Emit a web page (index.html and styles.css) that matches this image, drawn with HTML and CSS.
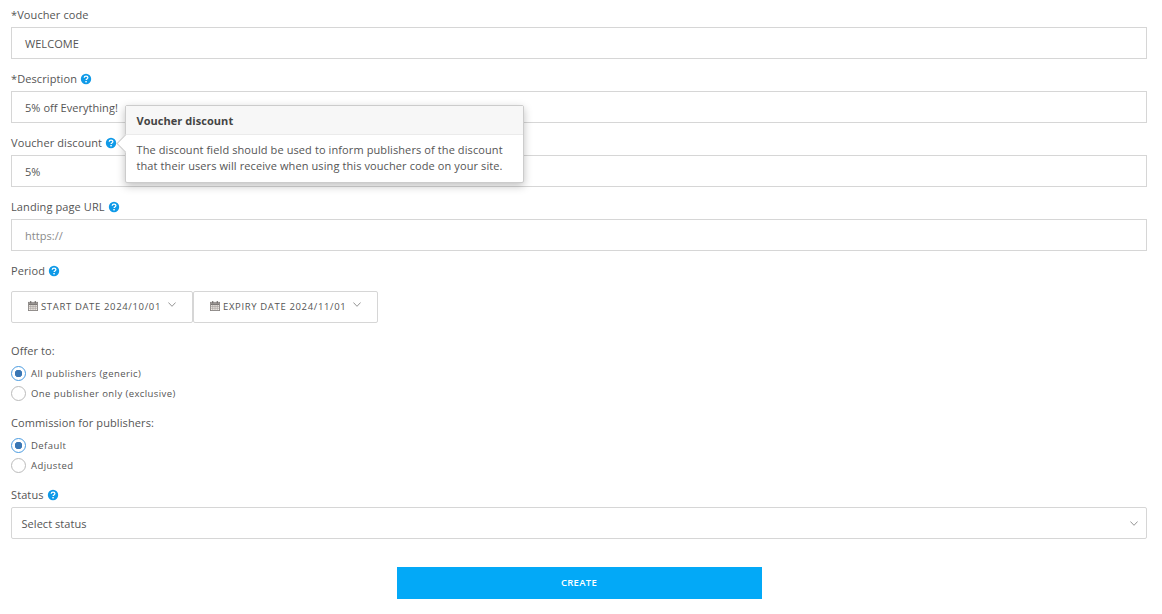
FILE: index.html
```html
<!DOCTYPE html>
<html lang="en">
<head>
<meta charset="utf-8">
<title>Voucher</title>
<link rel="stylesheet" href="styles.css">
</head>
<body>
<svg class="defs" width="0" height="0" aria-hidden="true">
  <symbol id="help" viewBox="0 0 12 12">
    <circle cx="6" cy="6" r="5.200" fill="#0f9ae8"/>
    <path d="M4.200 4.700C4.300 3.600 5 3.100 6 3.100c1.100 0 1.900.6 1.900 1.500 0 .8-.5 1.100-1.100 1.500-.5.3-.7.5-.7 1" fill="none" stroke="#fff" stroke-width="1.300"/>
    <rect x="5.300" y="8" width="1.500" height="1.400" fill="#fff"/>
  </symbol>
  <symbol id="cal" viewBox="0 0 11 11">
    <rect x=".5" y="1.500" width="10" height="9" fill="#f3eee8" stroke="#8a8684"/>
    <path d="M1 3.500h9" stroke="#7a7674" stroke-width="2"/>
    <path d="M.5 6h10M.5 8h10M3 4v6M5.500 4v6M8 4v6" stroke="#a09c9a" stroke-width=".7"/>
    <path d="M3 0v2.500M8 0v2.500" stroke="#6d6a68" stroke-width="1.200"/>
  </symbol>
  <symbol id="chev" viewBox="0 0 8 5">
    <path d="M.4.5 4 4.300 7.600.5" fill="none" stroke="#888" stroke-width=".9"/>
  </symbol>
</svg>
<form class="form">
  <div class="group">
    <div class="label">*Voucher code</div>
    <div class="input">WELCOME</div>
  </div>
  <div class="group">
    <div class="label">*Description <svg class="help"><use href="#help"/></svg></div>
    <div class="input">5% off Everything!</div>
  </div>
  <div class="group">
    <div class="label">Voucher discount <svg class="help"><use href="#help"/></svg></div>
    <div class="input">5%</div>
  </div>
  <div class="group">
    <div class="label">Landing page URL <svg class="help"><use href="#help"/></svg></div>
    <div class="input placeholder">https://</div>
  </div>
  <div class="group">
    <div class="label">Period <svg class="help"><use href="#help"/></svg></div>
    <div class="dates">
      <div class="date date-start"><svg class="cal"><use href="#cal"/></svg>START DATE 2024/10/01<svg class="chev chev-date"><use href="#chev"/></svg></div>
      <div class="date date-end"><svg class="cal"><use href="#cal"/></svg>EXPIRY DATE 2024/11/01<svg class="chev chev-date"><use href="#chev"/></svg></div>
    </div>
  </div>
  <div class="radios">
    <div class="label">Offer to:</div>
    <div class="radio"><span class="dot on"></span>All publishers (generic)</div>
    <div class="radio"><span class="dot"></span>One publisher only (exclusive)</div>
  </div>
  <div class="radios">
    <div class="label">Commission for publishers:</div>
    <div class="radio"><span class="dot on"></span>Default</div>
    <div class="radio"><span class="dot"></span>Adjusted</div>
  </div>
  <div class="group">
    <div class="label">Status <svg class="help"><use href="#help"/></svg></div>
    <div class="select">Select status<svg class="chev"><use href="#chev"/></svg></div>
  </div>
  <div class="actions"><button type="button" class="create">CREATE</button></div>
</form>
<div class="tooltip">
  <span class="arrow"></span>
  <div class="tip-title">Voucher discount</div>
  <div class="tip-body">The discount field should be used to inform publishers of the discount that their users will receive when using this voucher code on your site.</div>
</div>
</body>
</html>
```
FILE: styles.css
```css
* { box-sizing: border-box; }
html, body { margin: 0; background: #fff; }
body {
  font-family: "Open Sans", "Liberation Sans", sans-serif;
  font-size: 11px;
  color: #555;
  overflow: hidden;
  height: 614px;
}
.defs { position: absolute; }
.form { padding: 5px 15px 0 11px; }
.group { margin-bottom: 10px; }
.label {
  height: 20px;
  line-height: 20px;
  margin-bottom: 2px;
  font-size: 11px;
  letter-spacing: .1px;
  color: #555;
}
.help { width: 12px; height: 12px; vertical-align: -2px; }
.input {
  height: 32px;
  line-height: 32px;
  border: 1px solid #d6d6d6;
  padding-left: 13px;
  font-size: 11px;
  letter-spacing: .05px;
  color: #555;
}
.placeholder { color: #8a8a8a; }
.dates { display: flex; padding-top: 8px; margin-bottom: 18px; }
.date {
  height: 32px;
  display: flex;
  align-items: center;
  border: 1px solid #d6d6d6;
  border-radius: 2px;
  padding-bottom: 2px;
  font-size: 9.500px;
  letter-spacing: .65px;
  color: #555;
  position: relative;
}
.date-start { width: 182px; padding-left: 16px; }
.date-end { width: 185px; padding-left: 16px; }
.cal { width: 10px; height: 10px; margin-right: 3px; }
.chev { width: 8px; height: 5px; }
.chev-date { position: absolute; right: 16px; top: 10px; }
.radios { margin-bottom: 10px; }
.radios .label { margin-bottom: 2px; }
.radio {
  display: flex;
  align-items: center;
  height: 20px;
  font-size: 9.500px;
  letter-spacing: .42px;
  color: #555;
}
.dot {
  width: 15px;
  height: 15px;
  border: 1px solid #bbb;
  border-radius: 50%;
  margin-right: 5px;
  background: #fff;
}
.dot.on {
  border-color: #4a9be0;
  background: radial-gradient(circle, #3a77b5 0 3.500px, #fff 4px);
}
.select {
  height: 32px;
  display: flex;
  align-items: center;
  justify-content: space-between;
  border: 1px solid #d6d6d6;
  border-radius: 2px;
  padding: 0 8px 0 9.500px;
  font-size: 11px;
  letter-spacing: .05px;
  color: #555;
}
.actions { display: flex; justify-content: center; padding-top: 18px; }
.create {
  width: 365px;
  height: 32px;
  border: 0;
  padding: 0 0 2px;
  background: #03a9f7;
  color: #fff;
  font-family: inherit;
  font-size: 9.500px;
  font-weight: 600;
  letter-spacing: .3px;
}
.tooltip {
  position: absolute;
  left: 125px;
  top: 105px;
  width: 399px;
  height: 78px;
  background: #fff;
  border: 1px solid #ccc;
  border-radius: 2px;
  box-shadow: 0 3px 8px rgba(0,0,0,.25);
}
.arrow {
  position: absolute;
  left: -7px;
  top: 31px;
  width: 13px;
  height: 13px;
  background: #fff;
  border-left: 1px solid #ccc;
  border-bottom: 1px solid #ccc;
  transform: rotate(45deg);
}
.tip-title {
  position: relative;
  height: 29px;
  line-height: 29px;
  padding-left: 10.500px;
  background: #f7f7f7;
  border-bottom: 1px solid #ebebeb;
  font-size: 11px;
  font-weight: 700;
  letter-spacing: .05px;
  color: #444;
}
.tip-body {
  position: relative;
  padding: 7px 0 0 10.500px;
  font-size: 11px;
  line-height: 16px;
  letter-spacing: .1px;
  color: #555;
}
```
